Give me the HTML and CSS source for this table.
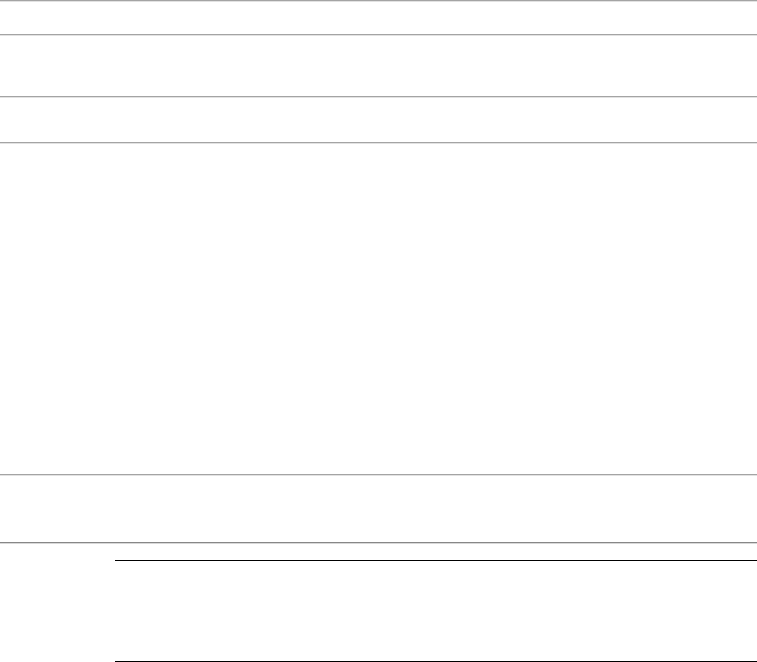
FILE: index.html
```html
<!DOCTYPE html>
<html lang="en">
<head>
    <meta charset="UTF-8">
    <title>Page</title>
    <link rel="stylesheet" href="styles.css">
</head>
<body>

<div class="page">
    <hr class="rule">
    <div class="block block-top"></div>
    <hr class="rule">
    <div class="block block-head"></div>
    <hr class="rule">
    <div class="block block-sub"></div>
    <hr class="rule">
    <div class="block block-main"></div>
    <hr class="rule">
    <div class="block block-foot"></div>
    <hr class="rule rule-dark">

    <!-- нижняя таблица с отступом слева -->
    <div class="table-box">
        <div class="table-body"></div>
    </div>
</div>

</body>
</html>
```

FILE: styles.css
```css
body {
    margin: 0;
    padding: 0;
    background: #ffffff;
    font-family: "Liberation Sans", Arial, sans-serif;
    overflow: hidden;
}

.page {
    width: 757px;
}

.rule {
    margin: 0;
    height: 0;
    border: none;
    border-top: 1px solid #a4a4a4;
    border-bottom: 1px solid #e2e2e2;
}

.rule-dark {
    border-top-color: #878787;
    border-bottom-color: #d8d8d8;
}

.block-top { height: 32px; }
.block-head { height: 60px; }
.block-sub { height: 44px; }
.block-main { height: 330px; }
.block-foot { height: 66px; }

.table-box {
    margin-top: 16px;
    margin-left: 115px;
}

.table-body {
    height: 100px;
    border-top: 1px solid #000000;
    border-bottom: 1px solid #000000;
}
```
